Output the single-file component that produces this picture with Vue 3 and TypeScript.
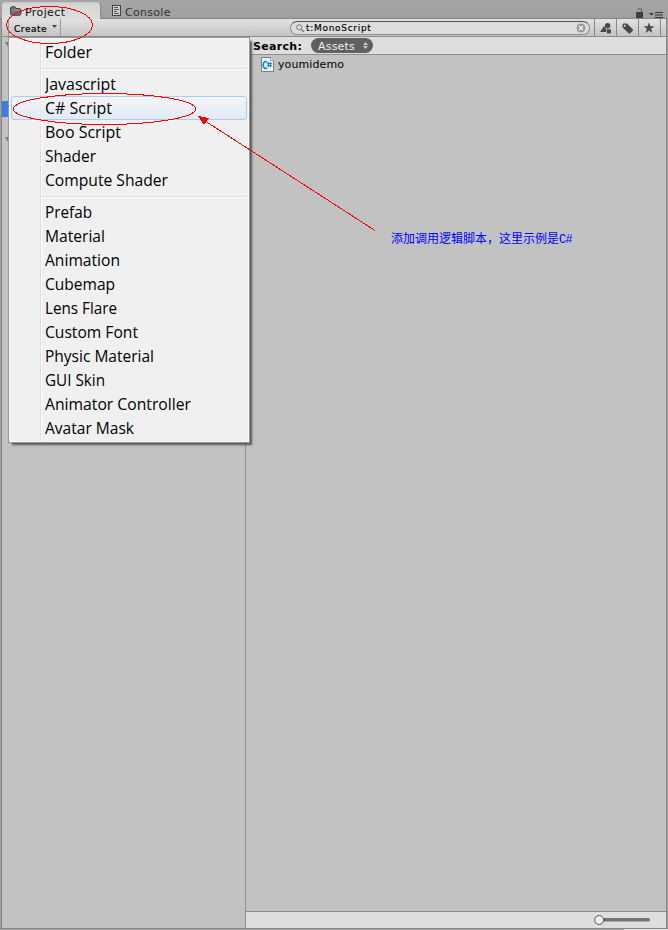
<script setup lang="ts">
interface MenuItem {
  label: string
  width: number
}

const groups: MenuItem[][] = [
  [{ label: 'Folder', width: 47 }],
  [
    { label: 'Javascript', width: 71 },
    { label: 'C# Script', width: 67 },
    { label: 'Boo Script', width: 76 },
    { label: 'Shader', width: 51 },
    { label: 'Compute Shader', width: 123 },
  ],
  [
    { label: 'Prefab', width: 47 },
    { label: 'Material', width: 60 },
    { label: 'Animation', width: 75 },
    { label: 'Cubemap', width: 70 },
    { label: 'Lens Flare', width: 72 },
    { label: 'Custom Font', width: 93 },
    { label: 'Physic Material', width: 109 },
    { label: 'GUI Skin', width: 60 },
    { label: 'Animator Controller', width: 146 },
    { label: 'Avatar Mask', width: 89 },
  ],
]
const active = 'C# Script'
</script>

<template>
  <div class="window">
    <header class="tabs">
      <div class="tab current">
        <svg class="folder" width="12" height="10" viewBox="0 0 12 10">
          <path d="M.5 8V2L1.5 .8H5L6 2.5H10L11 4V8L10 9.3H1.5Z" fill="#737373" stroke="#454545" />
          <path d="M2 4H10" stroke="#999" />
        </svg>
        <span>Project</span>
      </div>
      <div class="tab console">
        <svg width="9" height="11" viewBox="0 0 9 11">
          <rect x=".5" y=".5" width="8" height="10" fill="#d0d0d0" stroke="#444" />
          <path d="M2 2.5H6M2 4.5H7M2 6.5H5M2 8.5H7" stroke="#555" />
        </svg>
        <span>Console</span>
      </div>
      <div class="tab-tools">
        <svg width="30" height="11" viewBox="0 0 30 11">
          <path d="M0 4H7V10H0Z" fill="#3f3f3f" />
          <path d="M1.5 2.5V2L3 .7H4.5L5.5 2V5" fill="none" stroke="#555" />
          <path d="M13 5H18L15.5 7.5Z" fill="#333" />
          <path d="M19 4.5H27M19 7H27M19 9.5H27" stroke="#333" stroke-width="1.2" />
        </svg>
      </div>
    </header>

    <div class="toolbar">
      <button class="create">Create <svg width="5" height="3" viewBox="0 0 5 3"><path d="M0 0H5L2.5 3Z" fill="#444" /></svg></button>
      <div class="search">
        <svg width="9" height="9" viewBox="0 0 9 9"><circle cx="3.3" cy="3.3" r="2.6" fill="none" stroke="#777" /><path d="M5.2 5.2L8 8" stroke="#777" stroke-width="1.3" /></svg>
        <span class="query">t:MonoScript</span>
        <svg width="10" height="10" viewBox="0 0 10 10"><circle cx="5" cy="5" r="4.5" fill="#999" /><path d="M3 3L7 7M7 3L3 7" stroke="#eee" stroke-width="1.5" /></svg>
      </div>
      <div class="tool">
        <svg width="12" height="11" viewBox="0 0 12 11"><path d="M0 9L4 3L6.3 6.2V9Z" fill="#484848" /><circle cx="7.6" cy="2.8" r="2.7" fill="#484848" /><rect x="7" y="6.3" width="4" height="4" fill="#484848" /></svg>
      </div>
      <div class="tool">
        <svg width="12" height="11" viewBox="0 0 12 11"><path d="M.5 1.5L1.5 .5H5L11 6.6V7.5L8 10.5H7L.5 4.5Z" fill="#484848" /><circle cx="2.7" cy="2.7" r="1" fill="#ddd" /></svg>
      </div>
      <div class="tool star">
        <svg width="12" height="12" viewBox="0 0 12 12"><path d="M6 .3L7.3 4.3H11.5L8.1 6.8L9.4 11L6 8.5L2.6 11L3.9 6.8L.5 4.3H4.7Z" fill="#484848" /></svg>
      </div>
      <div class="tool-end"></div>
    </div>

    <main class="panes">
      <aside class="tree">
        <svg class="fold" width="6" height="5" viewBox="0 0 6 5"><path d="M0 0H6L3 5Z" fill="#777" /></svg>
        <div class="selected-row"></div>
        <svg class="fold second" width="6" height="5" viewBox="0 0 6 5"><path d="M0 0H6L3 5Z" fill="#777" /></svg>
      </aside>
      <section class="content">
        <div class="scope">
          <b>Search:</b>
          <span class="pill"><span>Assets</span>
            <svg width="5" height="7" viewBox="0 0 5 7"><path d="M0 3L2.5 0L5 3ZM0 4L2.5 7L5 4Z" fill="#c8c8c8" /></svg>
          </span>
        </div>
        <div class="results">
          <div class="file">
            <svg width="13" height="15" viewBox="0 0 13 15">
              <path d="M.5 .5H9.5L12.5 3.5V14.5H.5Z" fill="#eef4f7" stroke="#718390" />
              <path d="M9.5 .5V3.5H12.5" fill="#fff" stroke="#96a3ab" />
              <path d="M6 5C3.6 3.7 2.2 5.6 2.2 7.9S3.7 12.2 6.2 11" fill="none" stroke="#1685b4" stroke-width="1.7" />
              <path d="M7.3 5V10.2M9.3 5V10.2M5.8 6.6H11M5.8 8.6H11" stroke="#1685b4" />
            </svg>
            <span>youmidemo</span>
          </div>
        </div>
        <footer class="status">
          <svg width="58" height="12" viewBox="0 0 58 12">
            <rect x="6" y="4" width="50" height="3.5" rx="1.7" fill="#727272" />
            <path d="M7 7.5H55" stroke="#aaa" />
            <circle cx="5.2" cy="6" r="4.5" fill="#eee" stroke="#555" />
          </svg>
        </footer>
      </section>
    </main>
    <div class="base"><i></i></div>

    <nav class="menu">
      <div v-for="(group, index) in groups" :key="index" class="group">
        <div v-for="item in group" :key="item.label" class="item" :class="{ active: item.label === active }">
          <svg :width="item.width + 4" height="22"><text x="0" y="17" :textLength="item.width" lengthAdjust="spacingAndGlyphs">{{ item.label }}</text></svg>
        </div>
      </div>
    </nav>

    <svg class="marks" width="668" height="930" viewBox="0 0 668 930" shape-rendering="crispEdges">
      <g fill="none" stroke="#f00">
        <ellipse cx="49.5" cy="25" rx="43" ry="18.5" />
        <ellipse cx="104.5" cy="109" rx="91" ry="15.5" />
        <path d="M375 230.5L202 119" />
      </g>
      <path d="M198 116L209 118L204 125Z" fill="#f00" />
    </svg>
    <div class="note">添加调用逻辑脚本，这里示例是<span>C#</span></div>
  </div>
</template>

<style>
body { margin: 0; }
</style>

<style scoped>
* { box-sizing: border-box; }
svg { display: block; flex: none; }
.window {
  position: relative; width: 668px; height: 930px; overflow: hidden;
  display: flex; flex-direction: column; background: #a2a2a2;
  font: 11px/14px "DejaVu Sans", sans-serif; color: #111;
}
.tabs { height: 19px; padding: 2px 0 0 2px; display: flex; flex: none; background: linear-gradient(#a5a5a5, #9f9f9f); border-bottom: 1px solid #858585; }
.tab { display: flex; height: 17px; align-items: center; }
.tab.current { width: 99px; margin-bottom: -1px; padding: 4px 0 0 8px; gap: 3px; background: linear-gradient(#d4d4d4, #dedede); border-top: 1px solid #c8c8c8; border-right: 1px solid #8b8b8b; border-radius: 3px 4px 0 0; letter-spacing: .4px; }
.folder { margin-top: -4px; }
.console { padding: 4px 0 0 11px; gap: 4px; color: #333; letter-spacing: .3px; }
.console svg { margin-top: -5px; }
.tab-tools { margin-left: auto; padding: 6px 2px 0 0; }
.toolbar { height: 18px; flex: none; margin: 0 1px; display: flex; background: linear-gradient(#e2e2e2, #c4c4c4); border-bottom: 1px solid #8b8b8b; border-left: 1px solid #858585; border-right: 1px solid #858585; }
.create { width: 53px; margin-left: 6px; padding: 2px 0 0 5px; display: flex; align-items: center; gap: 5px; border: solid #999; border-width: 0 1px; background: none; font: 9px "DejaVu Sans", sans-serif; letter-spacing: .55px; color: #000; -webkit-text-stroke: .2px #000; }
.create svg { margin-top: -4px; }
.search { width: 300px; height: 14px; margin: 2px 4px 0 229px; padding: 0 3px 0 5px; display: flex; align-items: center; gap: 1px; background: #ddd; border: 1px solid #8c8c8c; border-top-color: #505050; border-radius: 7px; }
.query { flex: 1; font-size: 9px; letter-spacing: .7px; line-height: 12px; color: #000; -webkit-text-stroke: .15px #000; }
.tool { width: 22px; padding: 4px 0 0 5px; border-left: 1px solid #888; }
.tool.star { padding: 3px 0 0 4px; }
.tool-end { border-left: 1px solid #888; }
.panes { flex: 1; min-height: 0; margin: 0 1px; display: flex; border: solid #858585; border-width: 0 1px; }
.tree { width: 244px; padding-top: 5px; background: #c2c2c2; border-right: 1px solid #919191; }
.fold { margin-left: 3px; }
.selected-row { height: 16px; margin-top: 54px; background: #3d7de0; }
.fold.second { margin-top: 20px; }
.content { flex: 1; display: flex; flex-direction: column; background: #c2c2c2; }
.scope { height: 18px; padding: 1px 0 0 7px; display: flex; align-items: flex-start; background: #dedede; border-bottom: 1px solid #8f8f8f; color: #000; }
.scope b { width: 58px; line-height: 18px; height: 16px; letter-spacing: .3px; }
.pill { width: 62px; height: 15px; padding: 0 5px 0 7px; display: flex; align-items: center; justify-content: space-between; border-radius: 8px; background: #606060; color: #eee; }
.pill span { padding-top: 2px; letter-spacing: .2px; }
.results { flex: 1; padding: 1px 0 0 15px; }
.file { display: flex; align-items: center; gap: 4px; height: 16px; color: #000; }
.file span { letter-spacing: .1px; padding-top: 2px; }
.status { height: 17px; display: flex; justify-content: flex-end; padding: 2px 14px 0 0; background: #dedede; border-top: 1px solid #8b8b8b; }
.base { height: 2px; flex: none; display: flex; justify-content: flex-end; background: #a2a2a2; border-top: 1px solid #858585; }
.base i { width: 44px; height: 1px; background: #e8e8e8; }
.menu {
  position: absolute; left: 8px; top: 37px; width: 242px; height: 406px; padding: 2px;
  border: 1px solid #979797; box-shadow: inset 0 0 0 1px #f8f8f8, 3px 3px 2px -1px #555;
  background: linear-gradient(90deg, #f0f0f0 31px, #dedede 31px, #dedede 32px, #fff 32px, #fff 33px, #f0f0f0 33px);
}
.group + .group { position: relative; padding-top: 8px; }
.group + .group::before { content: ""; position: absolute; left: 30px; right: 0; top: 4px; height: 1px; border-top: 1px solid #dedede; background: #fff; }
.item { height: 24px; padding: 0 0 0 33px; border: 1px solid transparent; border-radius: 3px; }
.item.active { border-color: #aeccf2; background: linear-gradient(rgba(244, 247, 251, .65), rgba(221, 232, 247, .7)); }
.item text { font: 16px "Open Sans", sans-serif; fill: #000; }
.marks { position: absolute; left: 0; top: 0; pointer-events: none; }
.note { position: absolute; left: 391px; top: 230px; font: 12px/16px "Noto Sans CJK SC", sans-serif; color: #00f; white-space: nowrap; }
.note span { font-family: "Liberation Mono", monospace; letter-spacing: -.7px; }
</style>
